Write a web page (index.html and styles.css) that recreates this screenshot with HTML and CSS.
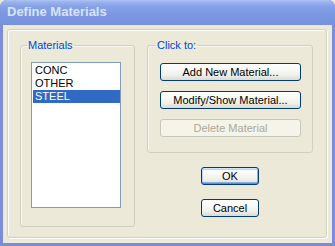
FILE: index.html
```html
<!DOCTYPE html>
<html>
<head>
<meta charset="utf-8">
<title>Define Materials</title>
<link rel="stylesheet" href="styles.css">
</head>
<body>
<div class="window">
  <div class="titlebar"><span class="title">Define Materials</span></div>
  <div class="client">
    <div class="frame">
      <fieldset class="group group-materials">
        <legend>Materials</legend>
        <ul class="listbox">
          <li>CONC</li>
          <li>OTHER</li>
          <li class="selected">STEEL</li>
        </ul>
      </fieldset>
      <div class="right-col">
        <fieldset class="group group-click">
          <legend>Click to:</legend>
          <button class="btn">Add New Material...</button>
          <button class="btn">Modify/Show Material...</button>
          <button class="btn" disabled>Delete Material</button>
        </fieldset>
        <button class="btn btn-small btn-default btn-ok">OK</button>
        <button class="btn btn-small">Cancel</button>
      </div>
    </div>
  </div>
</div>
</body>
</html>
```
FILE: styles.css
```css
html, body {
  margin: 0;
  padding: 0;
  background: #ECE9D8;
}
body {
  font: 11px "Liberation Sans", Arial, sans-serif;
}
.window {
  width: 335px;
  height: 246px;
  box-sizing: border-box;
  display: flex;
  flex-direction: column;
  background: #7A8CDA;
  border-radius: 7px 7px 0 0;
  overflow: hidden;
}
.titlebar {
  height: 25px;
  flex: none;
  box-sizing: border-box;
  padding: 0 0 2px 7px;
  display: flex;
  align-items: center;
  background: linear-gradient(#B0C4F4 0, #99B1EE 2px, #84A0E6 7px, #7D98E2 14px, #7A94E0 20px, #7890DD 25px);
}
.title {
  color: #D8E4F8;
  font: bold 13px "Liberation Sans", Arial, sans-serif;
}
.client {
  flex: 1;
  margin: 0 3px 3px;
  background: #ECE9D8;
  display: flex;
  padding: 4px 5px 5px 4px;
}
.frame {
  flex: 1;
  display: flex;
  gap: 12px;
  padding: 9px 0 10px 12px;
  border: 1px solid #D3D0BF;
  border-radius: 3px;
  box-shadow: inset 1px 1px 0 #FFFFFF, 1px 1px 0 #FFFFFF;
}
.group {
  margin: 0;
  border: 1px solid #D0D0BF;
  border-radius: 3px;
  box-shadow: inset 1px 1px 0 #F8F7F1;
  min-width: 0;
}
.group legend {
  color: #0046D5;
  line-height: 13px;
  padding: 0 1px;
  margin-left: -4px;
}
.group-materials {
  width: 115px;
  box-sizing: border-box;
  padding: 10px 13px 18px 10px;
  display: flex;
  flex-direction: column;
}
.listbox {
  flex: 1;
  margin: 0;
  padding: 1px 0 0 1px;
  list-style: none;
  background: #FFFFFF;
  border: 1px solid #7F9DB9;
}
.listbox li {
  line-height: 13px;
  height: 13px;
  padding-left: 2px;
  color: #000;
}
.listbox li.selected {
  background: #316AC5;
  color: #FFFFFF;
}
.right-col {
  width: 166px;
  display: flex;
  flex-direction: column;
  align-items: center;
}
.group-click {
  width: 166px;
  box-sizing: border-box;
  padding: 11px 11px 15px 12px;
  display: flex;
  flex-direction: column;
  gap: 10px;
}
.btn {
  font: 11px "Liberation Sans", Arial, sans-serif;
  color: #000;
  height: 18px;
  padding: 0;
  border: 1px solid #003C74;
  border-radius: 3px;
  background: linear-gradient(#FFFFFF 0, #FAFAF8 30%, #F0F0EA 70%, #E3E0D6 90%, #D6D0C5 100%);
  box-shadow: inset 0 -1px 0 #E0DCD0;
}
.btn:disabled {
  color: #ACA899;
  border-color: #C9C7BA;
  background: #F5F4EA;
  box-shadow: none;
}
.btn-small {
  width: 58px;
}
.btn-ok {
  margin-top: 14px;
  margin-bottom: 14px;
}
.btn-default {
  box-shadow: inset 0 1px 0 #CEE7FF, inset 0 -1px 0 #6982EE, inset 1px 0 0 #B8D2F8, inset -1px 0 0 #8EAAF2, inset 0 2px 0 #BCD4F6, inset 0 -2px 0 #89ADE4;
}
```
